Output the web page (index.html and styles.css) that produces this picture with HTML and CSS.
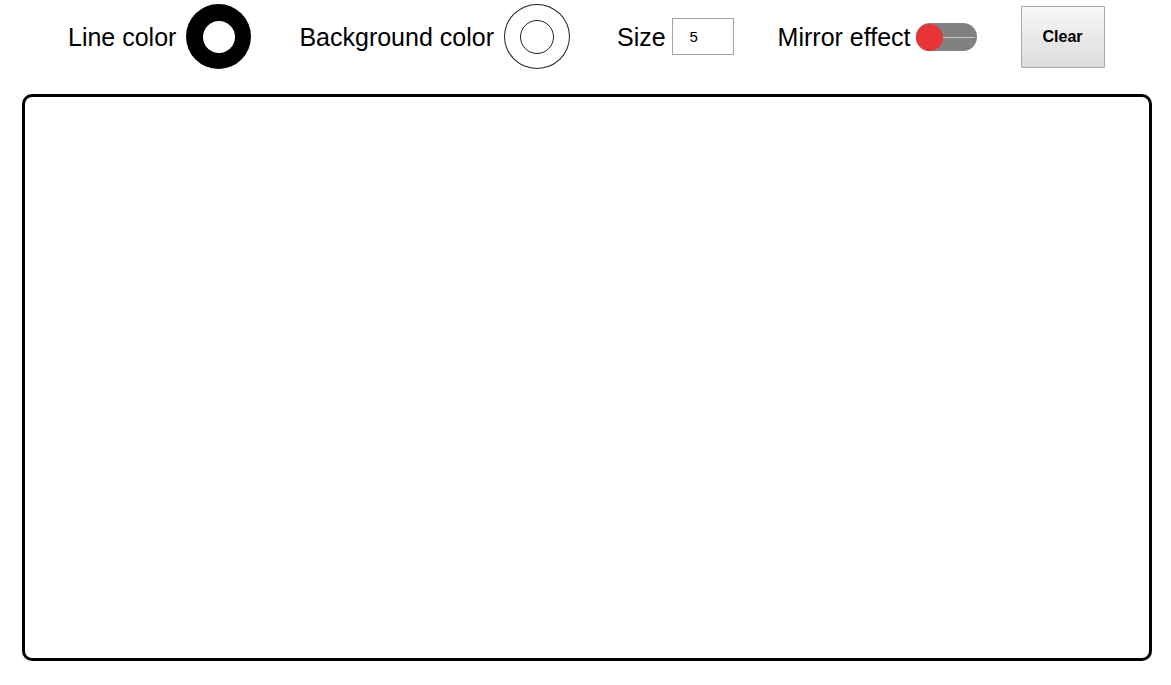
FILE: index.html
```html
<!DOCTYPE html>
<html>
<head>
<meta charset="utf-8">
<link rel="stylesheet" href="styles.css">
</head>
<body>
<div class="toolbar">
  <div class="group g-line">
    <span class="label">Line color</span>
    <div class="swatch-line"><div class="swatch-line-inner"></div></div>
  </div>
  <div class="group g-bg">
    <span class="label">Background color</span>
    <div class="swatch-bg"><div class="swatch-bg-inner"></div></div>
  </div>
  <div class="group g-size">
    <span class="label">Size</span>
    <div class="size-input">5</div>
  </div>
  <div class="group g-mirror">
    <span class="label">Mirror effect</span>
    <div class="toggle"><div class="toggle-line"></div><div class="knob"></div></div>
  </div>
  <div class="clear-btn">Clear</div>
</div>
<div class="canvas"></div>
</body>
</html>
```

FILE: styles.css
```css
html, body {
  margin: 0;
  padding: 0;
  background: #fff;
}
body {
  font-family: "Liberation Sans", Arial, sans-serif;
  color: #000;
}
.toolbar {
  height: 73px;
  display: flex;
  align-items: center;
  padding-left: 68px;
}
.group {
  display: flex;
  align-items: center;
}
.label {
  font-size: 25px;
  line-height: 30px;
  padding-top: 1px;
}
.g-line { margin-right: 48px; }
.g-bg { margin-right: 47px; }
.g-size { margin-right: 44px; }
.g-mirror { margin-right: 44px; }

.swatch-line {
  width: 65px;
  height: 65px;
  margin-left: 10px;
  border-radius: 50%;
  background: #000;
  display: flex;
  align-items: center;
  justify-content: center;
}
.swatch-line-inner {
  width: 32px;
  height: 32px;
  border-radius: 50%;
  background: #fff;
}
.swatch-bg {
  box-sizing: border-box;
  width: 66px;
  height: 65px;
  margin-left: 10px;
  border-radius: 50%;
  border: 1px solid #222;
  background: #fff;
  display: flex;
  align-items: center;
  justify-content: center;
}
.swatch-bg-inner {
  box-sizing: border-box;
  width: 34px;
  height: 34px;
  border-radius: 50%;
  border: 1px solid #222;
}
.size-input {
  box-sizing: border-box;
  width: 62px;
  height: 37px;
  margin-left: 6px;
  border: 1px solid #a3a3a3;
  font-size: 15px;
  line-height: 35px;
  padding-left: 17px;
}
.toggle {
  position: relative;
  width: 61px;
  height: 28px;
  margin-left: 5px;
  border-radius: 14px;
  background: #818181;
}
.toggle-line {
  position: absolute;
  left: 24px;
  right: 2px;
  top: 14px;
  height: 1px;
  background: #c4c4c4;
}
.knob {
  position: absolute;
  left: 0;
  top: 1px;
  width: 27px;
  height: 27px;
  border-radius: 50%;
  background: #e83434;
}
.clear-btn {
  box-sizing: border-box;
  width: 84px;
  height: 62px;
  border: 1px solid #a9a9a9;
  border-radius: 1px;
  background: linear-gradient(#f7f7f7, #dcdcdc);
  display: flex;
  align-items: center;
  justify-content: center;
  font-size: 16px;
  font-weight: bold;
}
.canvas {
  box-sizing: border-box;
  margin: 21px 0 0 22px;
  width: 1130px;
  height: 567px;
  border: 3px solid #000;
  border-radius: 10px;
  background: #fff;
}
```
